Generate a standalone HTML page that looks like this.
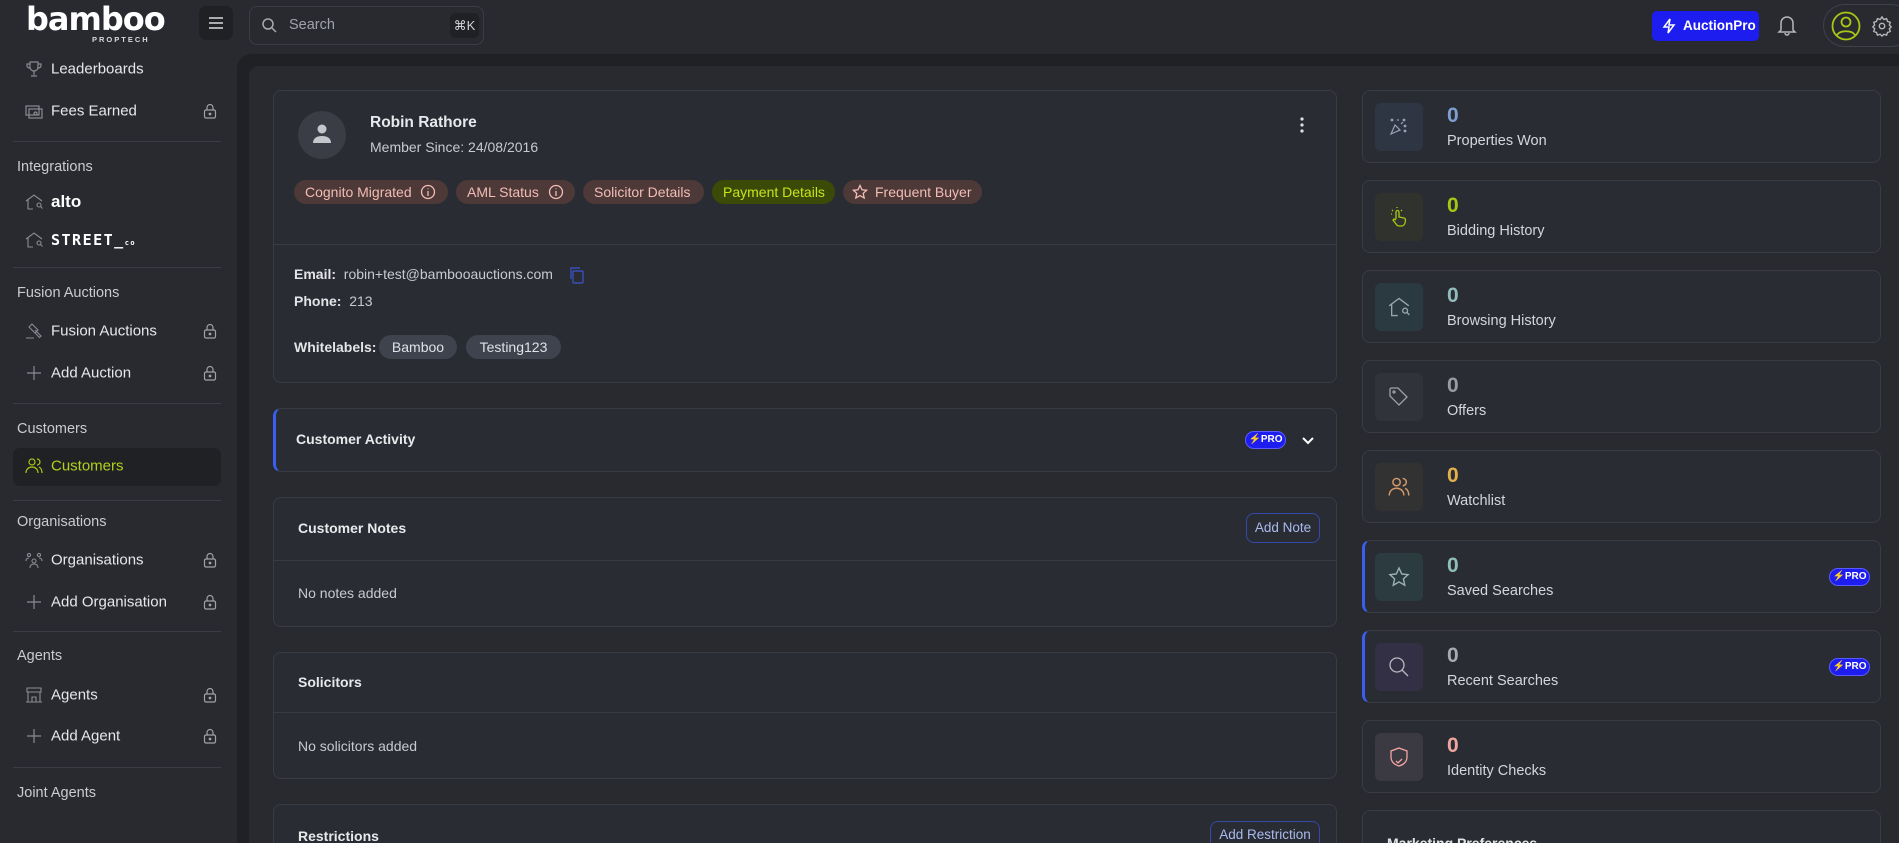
<!DOCTYPE html>
<html><head><meta charset="utf-8"><style>
*{box-sizing:border-box;margin:0;padding:0}
html,body{width:1899px;height:843px;overflow:hidden}
body{background:#282a30;font-family:"Liberation Sans",sans-serif;color:#e3e4e7}
#w{position:relative;width:1899px;height:843px;overflow:hidden}
.a{position:absolute}
.side{left:0;top:54px;width:237px;height:789px;background:#282a30}
.si{position:absolute;left:51px;font-size:15px;color:#e6e7ea;transform:translateY(-50%)}
.sh{position:absolute;left:17px;font-size:14.5px;color:#c9cbd0;transform:translateY(-50%)}
.div{position:absolute;left:13px;width:208px;height:1px;background:#3a3d44}
.ic{position:absolute;left:25px;width:18px;height:18px;transform:translateY(-50%)}
.lock{position:absolute;left:203px;width:14px;height:16px;transform:translateY(-50%)}
.card{position:absolute;background:#292c32;border:1px solid #393c43;border-radius:8px}
.tag{position:absolute;top:180px;height:24px;border-radius:12px;font-size:14px;line-height:24px;padding-left:11px;white-space:nowrap}
.rc{position:absolute;left:1362px;width:519px;height:73px;background:#292c32;border:1px solid #393c43;border-radius:8px}
.rc .ib{position:absolute;left:12px;top:12px;width:48px;height:48px;border-radius:6px}
.rc .n{position:absolute;left:84px;top:13px;font-size:21px;font-weight:bold}
.rc .l{position:absolute;left:84px;top:42px;font-size:14.5px;color:#d4d6da}
.pro{position:absolute;width:41px;height:18px;border-radius:9px;background:#1d1df0;border:1px solid #5a5aff;color:#fff;font-size:10px;font-weight:bold;line-height:16px;text-align:center}
.hd{position:absolute;font-size:14px;font-weight:bold;color:#e8e9ec}
.bt{position:absolute;border:1px solid #3549a8;border-radius:8px;color:#a9baf0;font-size:13.5px;text-align:center;white-space:nowrap}
</style></head><body><div id="w">
<!-- topbar -->
<div class="a" style="left:26px;top:0px;font-size:32px;color:#fff;letter-spacing:-1px;font-family:'DejaVu Sans',sans-serif;font-weight:bold">bamboo</div>
<div class="a" style="left:92px;top:35px;font-size:7.5px;letter-spacing:2px;color:#d8d9dc;font-weight:bold">PROPTECH</div>
<div class="a" style="left:199px;top:6px;width:34px;height:34px;background:#1f2125;border-radius:7px"></div>
<svg class="a" style="left:207px;top:14px" width="18" height="18" viewBox="0 0 18 18" stroke="#d8d9dc" stroke-width="1.6"><path d="M2 4h14M2 9h14M2 14h14"/></svg>
<div class="a" style="left:249px;top:6px;width:235px;height:39px;border:1px solid #3a3d44;border-radius:8px"></div>
<svg class="a" style="left:261px;top:17px" width="16" height="16" viewBox="0 0 16 16" fill="none" stroke="#a8aab0" stroke-width="1.5"><circle cx="7" cy="7" r="5"/><path d="M11 11l4 4"/></svg>
<div class="a" style="left:289px;top:17px;font-size:14.5px;color:#a0a3a9">Search</div>
<div class="a" style="left:450px;top:13px;width:29px;height:25px;background:#1f2125;border-radius:5px;font-size:13px;color:#d0d2d6;text-align:center;line-height:25px">⌘K</div>
<div class="a" style="left:1652px;top:11px;width:107px;height:30px;background:#1d1df0;border-radius:5px;color:#fff;font-weight:bold;font-size:13.5px;line-height:30px;padding-left:31px;white-space:nowrap">AuctionPro</div>
<svg class="a" style="left:1662px;top:18px" width="14" height="16" viewBox="0 0 14 16" fill="none" stroke="#fff" stroke-width="1.5"><path d="M8 1L2 9h5l-1 6 6-8H7z"/></svg>
<svg class="a" style="left:1777px;top:14px" width="20" height="22" viewBox="0 0 20 22" fill="none" stroke="#b5b7bc" stroke-width="1.5"><path d="M4 16V9a6 6 0 0112 0v7l2 2H2z"/><path d="M8 19a2 2 0 004 0"/></svg>
<div class="a" style="left:1823px;top:4px;width:90px;height:43px;border:1px solid #3e4148;border-radius:22px"></div>
<svg class="a" style="left:1831px;top:11px" width="30" height="30" viewBox="0 0 30 30" fill="none" stroke="#a8c614" stroke-width="1.8"><circle cx="15" cy="15" r="13.5"/><circle cx="15" cy="11" r="4.5"/><path d="M6 24c3-5 15-5 18 0"/></svg>
<svg class="a" style="left:1871px;top:15px" width="22" height="22" viewBox="0 0 24 24" fill="none" stroke="#b5b7bc" stroke-width="1.5"><circle cx="12" cy="12" r="3"/><path d="M12 2l2 3 3-1 1 3 3 1-1 3 2 2-2 2 1 3-3 1-1 3-3-1-2 2-2-2-3 1-1-3-3-1 1-3-2-2 2-2-1-3 3-1 1-3 3 1z"/></svg>
<!-- main frame -->
<div class="a" style="left:237px;top:54px;width:1662px;height:789px;background:#1f2125;border-radius:14px 0 0 0"></div>
<div class="a" style="left:249px;top:66px;width:1650px;height:777px;background:#282a30;border-radius:10px 0 0 0"></div>
<!-- sidebar -->
<div class="side a"></div>
<svg class="ic" style="top:69px" viewBox="0 0 18 18" fill="none" stroke="#8a8c92" stroke-width="1.2"><path d="M5 2h8v5a4 4 0 01-8 0zM5 4H2v2a3 3 0 003 2M13 4h3v2a3 3 0 01-3 2M9 11v4M6 16h6"/></svg>
<div class="si" style="top:69px">Leaderboards</div>
<svg class="ic" style="top:111px" viewBox="0 0 18 18" fill="none" stroke="#8a8c92" stroke-width="1.2"><rect x="1" y="4" width="13" height="9"/><rect x="4" y="7" width="13" height="9"/><circle cx="10.5" cy="11.5" r="1.5"/></svg>
<div class="si" style="top:111px">Fees Earned</div>
<div class="div" style="top:141px"></div>
<div class="sh" style="top:167px">Integrations</div>
<svg class="ic" style="top:202px" viewBox="0 0 18 18" fill="none" stroke="#8a8c92" stroke-width="1.1"><path d="M1 8l8-6 8 6M3 7v9h5M12 12a2 2 0 104 0 2 2 0 10-4 0M15.5 13.5l2 2"/></svg>
<div class="si" style="top:202px;font-weight:bold;font-size:17px;color:#fff">alto</div>
<svg class="ic" style="top:240px" viewBox="0 0 18 18" fill="none" stroke="#8a8c92" stroke-width="1.1"><path d="M1 8l8-6 8 6M3 7v9h5M12 12a2 2 0 104 0 2 2 0 10-4 0M15.5 13.5l2 2"/></svg>
<div class="si" style="top:240px;font-weight:bold;font-size:15px;color:#fff;letter-spacing:1.5px;font-family:'DejaVu Sans Mono',monospace">STREET_<span style="font-size:7px">co</span></div>
<div class="div" style="top:267px"></div>
<div class="sh" style="top:293px">Fusion Auctions</div>
<svg class="ic" style="top:331px" viewBox="0 0 18 18" fill="none" stroke="#8a8c92" stroke-width="1.1"><path d="M7 2l6 6-3 3-6-6zM10 8l6 6-1.5 1.5-6-6M1 16h8"/></svg>
<div class="si" style="top:331px">Fusion Auctions</div>
<svg class="ic" style="top:373px" viewBox="0 0 18 18" stroke="#8a8c92" stroke-width="1.2"><path d="M9 2v14M2 9h14"/></svg>
<div class="si" style="top:373px">Add Auction</div>
<div class="div" style="top:403px"></div>
<div class="sh" style="top:429px">Customers</div>
<div class="a" style="left:13px;top:448px;width:208px;height:38px;background:#1f2125;border-radius:7px"></div>
<svg class="ic" style="top:466px" viewBox="0 0 18 18" fill="none" stroke="#a8c614" stroke-width="1.2"><circle cx="7" cy="5" r="3"/><path d="M1 16c0-4 3-6 6-6s6 2 6 6M12 2a3 3 0 010 6M14 10c2 1 3 3 3 6"/></svg>
<div class="si" style="top:466px;color:#b4d11b">Customers</div>
<div class="div" style="top:500px"></div>
<div class="sh" style="top:522px">Organisations</div>
<svg class="ic" style="top:560px" viewBox="0 0 18 18" fill="none" stroke="#8a8c92" stroke-width="1.1"><circle cx="4" cy="4" r="1.6"/><circle cx="14" cy="4" r="1.6"/><circle cx="9" cy="10" r="2"/><path d="M5 17c0-3 2-4 4-4s4 1 4 4M1 10c0-2 1-3 3-3M17 10c0-2-1-3-3-3"/></svg>
<div class="si" style="top:560px">Organisations</div>
<svg class="ic" style="top:602px" viewBox="0 0 18 18" stroke="#8a8c92" stroke-width="1.2"><path d="M9 2v14M2 9h14"/></svg>
<div class="si" style="top:602px">Add Organisation</div>
<div class="div" style="top:631px"></div>
<div class="sh" style="top:656px">Agents</div>
<svg class="ic" style="top:695px" viewBox="0 0 18 18" fill="none" stroke="#8a8c92" stroke-width="1.1"><path d="M2 2h14v4H2zM3 6v10h12V6M7 16v-5h4v5M1 16h16"/></svg>
<div class="si" style="top:695px">Agents</div>
<svg class="ic" style="top:736px" viewBox="0 0 18 18" stroke="#8a8c92" stroke-width="1.2"><path d="M9 2v14M2 9h14"/></svg>
<div class="si" style="top:736px">Add Agent</div>
<div class="div" style="top:767px"></div>
<div class="sh" style="top:793px">Joint Agents</div>
<svg class="lock" style="top:111px" viewBox="0 0 14 16" fill="none" stroke="#a0a2a8" stroke-width="1.2"><rect x="1.5" y="7" width="11" height="8" rx="1.5"/><path d="M4 7V4.5a3 3 0 016 0V7"/><circle cx="7" cy="11" r=".8" fill="#a0a2a8"/></svg>
<svg class="lock" style="top:331px" viewBox="0 0 14 16" fill="none" stroke="#a0a2a8" stroke-width="1.2"><rect x="1.5" y="7" width="11" height="8" rx="1.5"/><path d="M4 7V4.5a3 3 0 016 0V7"/><circle cx="7" cy="11" r=".8" fill="#a0a2a8"/></svg>
<svg class="lock" style="top:373px" viewBox="0 0 14 16" fill="none" stroke="#a0a2a8" stroke-width="1.2"><rect x="1.5" y="7" width="11" height="8" rx="1.5"/><path d="M4 7V4.5a3 3 0 016 0V7"/><circle cx="7" cy="11" r=".8" fill="#a0a2a8"/></svg>
<svg class="lock" style="top:560px" viewBox="0 0 14 16" fill="none" stroke="#a0a2a8" stroke-width="1.2"><rect x="1.5" y="7" width="11" height="8" rx="1.5"/><path d="M4 7V4.5a3 3 0 016 0V7"/><circle cx="7" cy="11" r=".8" fill="#a0a2a8"/></svg>
<svg class="lock" style="top:602px" viewBox="0 0 14 16" fill="none" stroke="#a0a2a8" stroke-width="1.2"><rect x="1.5" y="7" width="11" height="8" rx="1.5"/><path d="M4 7V4.5a3 3 0 016 0V7"/><circle cx="7" cy="11" r=".8" fill="#a0a2a8"/></svg>
<svg class="lock" style="top:695px" viewBox="0 0 14 16" fill="none" stroke="#a0a2a8" stroke-width="1.2"><rect x="1.5" y="7" width="11" height="8" rx="1.5"/><path d="M4 7V4.5a3 3 0 016 0V7"/><circle cx="7" cy="11" r=".8" fill="#a0a2a8"/></svg>
<svg class="lock" style="top:736px" viewBox="0 0 14 16" fill="none" stroke="#a0a2a8" stroke-width="1.2"><rect x="1.5" y="7" width="11" height="8" rx="1.5"/><path d="M4 7V4.5a3 3 0 016 0V7"/><circle cx="7" cy="11" r=".8" fill="#a0a2a8"/></svg>

<!-- profile card -->
<div class="card" style="left:273px;top:90px;width:1064px;height:293px"></div>
<div class="a" style="left:274px;top:244px;width:1062px;height:1px;background:#393c43"></div>
<div class="a" style="left:298px;top:111px;width:48px;height:48px;border-radius:50%;background:#3a3d45"></div>
<svg class="a" style="left:310px;top:122px" width="24" height="24" viewBox="0 0 24 24" fill="#c4c6cc"><circle cx="12" cy="7" r="4.5"/><path d="M3 21c0-5 4-7 9-7s9 2 9 7z"/></svg>
<div class="a" style="left:370px;top:114px;font-size:15.5px;font-weight:bold;color:#e8e9ec">Robin Rathore</div>
<div class="a" style="left:370px;top:139px;font-size:14px;color:#c8cacf">Member Since: 24/08/2016</div>
<svg class="a" style="left:1294px;top:116px" width="16" height="18" viewBox="0 0 4 18" fill="#e0e1e4"><circle cx="2" cy="3" r="1.6"/><circle cx="2" cy="9" r="1.6"/><circle cx="2" cy="15" r="1.6"/></svg>
<div class="tag" style="left:294px;width:154px;background:#4d3937;color:#f3bcb6">Cognito Migrated</div>
<div class="tag" style="left:456px;width:119px;background:#4d3937;color:#f3bcb6">AML Status</div>
<div class="tag" style="left:583px;width:121px;background:#4d3937;color:#f3bcb6">Solicitor Details</div>
<div class="tag" style="left:712px;width:123px;background:#3c4a08;color:#c7e41c">Payment Details</div>
<div class="tag" style="left:843px;width:139px;background:#4d3937;color:#f3bcb6;padding-left:32px">Frequent Buyer</div>
<svg class="a" style="left:420px;top:184px" width="16" height="16" viewBox="0 0 16 16" fill="none" stroke="#f3bcb6" stroke-width="1.3"><circle cx="8" cy="8" r="6.5"/><path d="M8 7v5M8 4.5v.8"/></svg>
<svg class="a" style="left:548px;top:184px" width="16" height="16" viewBox="0 0 16 16" fill="none" stroke="#f3bcb6" stroke-width="1.3"><circle cx="8" cy="8" r="6.5"/><path d="M8 7v5M8 4.5v.8"/></svg>
<svg class="a" style="left:852px;top:184px" width="16" height="16" viewBox="0 0 16 16" fill="none" stroke="#f3bcb6" stroke-width="1.3"><path d="M8 1.5l2 4.3 4.6.5-3.4 3.1 1 4.6L8 11.6 3.8 14l1-4.6L1.4 6.3 6 5.8z"/></svg>
<div class="a" style="left:294px;top:266px;font-size:14px"><b>Email:</b>&nbsp; <span style="color:#c8cacf">robin+test@bambooauctions.com</span></div>
<svg class="a" style="left:569px;top:266px" width="16" height="18" viewBox="0 0 16 18" fill="none" stroke="#3b4fb8" stroke-width="1.4"><rect x="4" y="5" width="10" height="12" rx="1"/><path d="M2 13V2h9"/></svg>
<div class="a" style="left:294px;top:293px;font-size:14px"><b>Phone:</b>&nbsp; <span style="color:#c8cacf">213</span></div>
<div class="a" style="left:294px;top:339px;font-size:14px;font-weight:bold">Whitelabels:</div>
<div class="a" style="left:379px;top:335px;width:78px;height:24px;border-radius:12px;background:#3e434e;font-size:14px;line-height:24px;text-align:center;color:#dfe2e8">Bamboo</div>
<div class="a" style="left:466px;top:335px;width:95px;height:24px;border-radius:12px;background:#3e434e;font-size:14px;line-height:24px;text-align:center;color:#dfe2e8">Testing123</div>

<!-- Customer Activity -->
<div class="card" style="left:273px;top:408px;width:1064px;height:64px;border-left:3px solid #3a5ef0"></div>
<div class="hd" style="left:296px;top:431px">Customer Activity</div>
<div class="pro" style="left:1245px;top:431px">⚡PRO</div>
<svg class="a" style="left:1301px;top:433px" width="14" height="14" viewBox="0 0 14 14" fill="none" stroke="#fff" stroke-width="2"><path d="M2 5l5 5 5-5"/></svg>
<!-- Notes -->
<div class="card" style="left:273px;top:497px;width:1064px;height:130px"></div>
<div class="a" style="left:274px;top:560px;width:1062px;height:1px;background:#393c43"></div>
<div class="hd" style="left:298px;top:520px">Customer Notes</div>
<div class="bt" style="left:1246px;top:513px;width:74px;height:30px;line-height:28px">Add Note</div>
<div class="a" style="left:298px;top:585px;font-size:14px;color:#c8cacf">No notes added</div>
<!-- Solicitors -->
<div class="card" style="left:273px;top:652px;width:1064px;height:127px"></div>
<div class="a" style="left:274px;top:712px;width:1062px;height:1px;background:#393c43"></div>
<div class="hd" style="left:298px;top:674px">Solicitors</div>
<div class="a" style="left:298px;top:738px;font-size:14px;color:#c8cacf">No solicitors added</div>
<!-- Restrictions -->
<div class="card" style="left:273px;top:804px;width:1064px;height:80px"></div>
<div class="hd" style="left:298px;top:828px">Restrictions</div>
<div class="bt" style="left:1210px;top:821px;width:110px;height:30px;line-height:26px">Add Restriction</div>

<!-- right column -->
<div class="rc" style="top:90px"><div class="ib" style="background:#2e3643"></div><div class="n" style="color:#7f9fd0">0</div><div class="l">Properties Won</div>
<svg class="a" style="left:25px;top:25px" width="22" height="22" viewBox="0 0 22 22" fill="none" stroke="#9aa5b8" stroke-width="1.2"><path d="M3 18l4-9 5 5z"/><circle cx="4" cy="4" r=".8"/><circle cx="16" cy="4" r=".8"/><circle cx="17" cy="10" r=".8"/><circle cx="17" cy="15" r=".8"/><path d="M10 3v2M13 8l2-2"/></svg></div>
<div class="rc" style="top:180px"><div class="ib" style="background:#30332d"></div><div class="n" style="color:#a8c614">0</div><div class="l">Bidding History</div>
<svg class="a" style="left:25px;top:25px" width="22" height="22" viewBox="0 0 22 22" fill="none" stroke="#a8c614" stroke-width="1.3"><path d="M8 13V6a1.5 1.5 0 013 0v5l5 1c1 .3 1.5 1 1.5 2l-.5 3a4 4 0 01-4 3h-2a4 4 0 01-3-2l-3-4 1-1 2 1"/><path d="M5 5l-1-1M9 2v-1M13 5l1-1M4 8H3"/></svg></div>
<div class="rc" style="top:270px"><div class="ib" style="background:#2b3a40"></div><div class="n" style="color:#92bcbc">0</div><div class="l">Browsing History</div>
<svg class="a" style="left:25px;top:25px" width="22" height="22" viewBox="0 0 18 18" fill="none" stroke="#98a6ad" stroke-width="1.1"><path d="M1 8l8-6 8 6M3 7v9h5M12 12a2 2 0 104 0 2 2 0 10-4 0M15.5 13.5l2 2"/></svg></div>
<div class="rc" style="top:360px"><div class="ib" style="background:#30333a"></div><div class="n" style="color:#9a9ca3">0</div><div class="l">Offers</div>
<svg class="a" style="left:25px;top:25px" width="22" height="22" viewBox="0 0 22 22" fill="none" stroke="#a0a2a8" stroke-width="1.3"><path d="M2 3v7l9 9 8-8-9-9H3z"/><circle cx="6" cy="6" r="1"/></svg></div>
<div class="rc" style="top:450px"><div class="ib" style="background:#333232"></div><div class="n" style="color:#e3b04c">0</div><div class="l">Watchlist</div>
<svg class="a" style="left:25px;top:25px" width="22" height="22" viewBox="0 0 18 18" fill="none" stroke="#d39a6a" stroke-width="1.2"><circle cx="7" cy="5" r="3"/><path d="M1 16c0-4 3-6 6-6s6 2 6 6M12 2a3 3 0 010 6M14 10c2 1 3 3 3 6"/></svg></div>
<div class="rc" style="top:540px;border-left:3px solid #3a5ef0"><div class="ib" style="left:10px;background:#2b3b40"></div><div class="n" style="left:82px;color:#8fc0b8">0</div><div class="l" style="left:82px">Saved Searches</div>
<svg class="a" style="left:23px;top:25px" width="22" height="22" viewBox="0 0 16 16" fill="none" stroke="#a0b0b8" stroke-width="1"><path d="M8 1.5l2 4.3 4.6.5-3.4 3.1 1 4.6L8 11.6 3.8 14l1-4.6L1.4 6.3 6 5.8z"/></svg>
<div class="pro" style="left:464px;top:27px">⚡PRO</div></div>
<div class="rc" style="top:630px;border-left:3px solid #3a5ef0"><div class="ib" style="left:10px;background:#332f45"></div><div class="n" style="left:82px;color:#a8abb2">0</div><div class="l" style="left:82px">Recent Searches</div>
<svg class="a" style="left:23px;top:25px" width="22" height="22" viewBox="0 0 22 22" fill="none" stroke="#b8bac0" stroke-width="1.3"><circle cx="9" cy="9" r="7"/><path d="M14 14l6 6"/></svg>
<div class="pro" style="left:464px;top:27px">⚡PRO</div></div>
<div class="rc" style="top:720px"><div class="ib" style="background:#3b3a42"></div><div class="n" style="color:#f0a5a0">0</div><div class="l">Identity Checks</div>
<svg class="a" style="left:25px;top:25px" width="22" height="22" viewBox="0 0 22 22" fill="none" stroke="#f0a5a0" stroke-width="1.3"><path d="M11 2l8 3v6c0 5-4 8-8 9-4-1-8-4-8-9V5z"/><path d="M8 15l2 2 4-4"/></svg></div>
<div class="rc" style="top:810px;height:60px"><div class="a" style="left:24px;top:24px;font-size:14px;font-weight:bold">Marketing Preferences</div></div>
</div></body></html>
